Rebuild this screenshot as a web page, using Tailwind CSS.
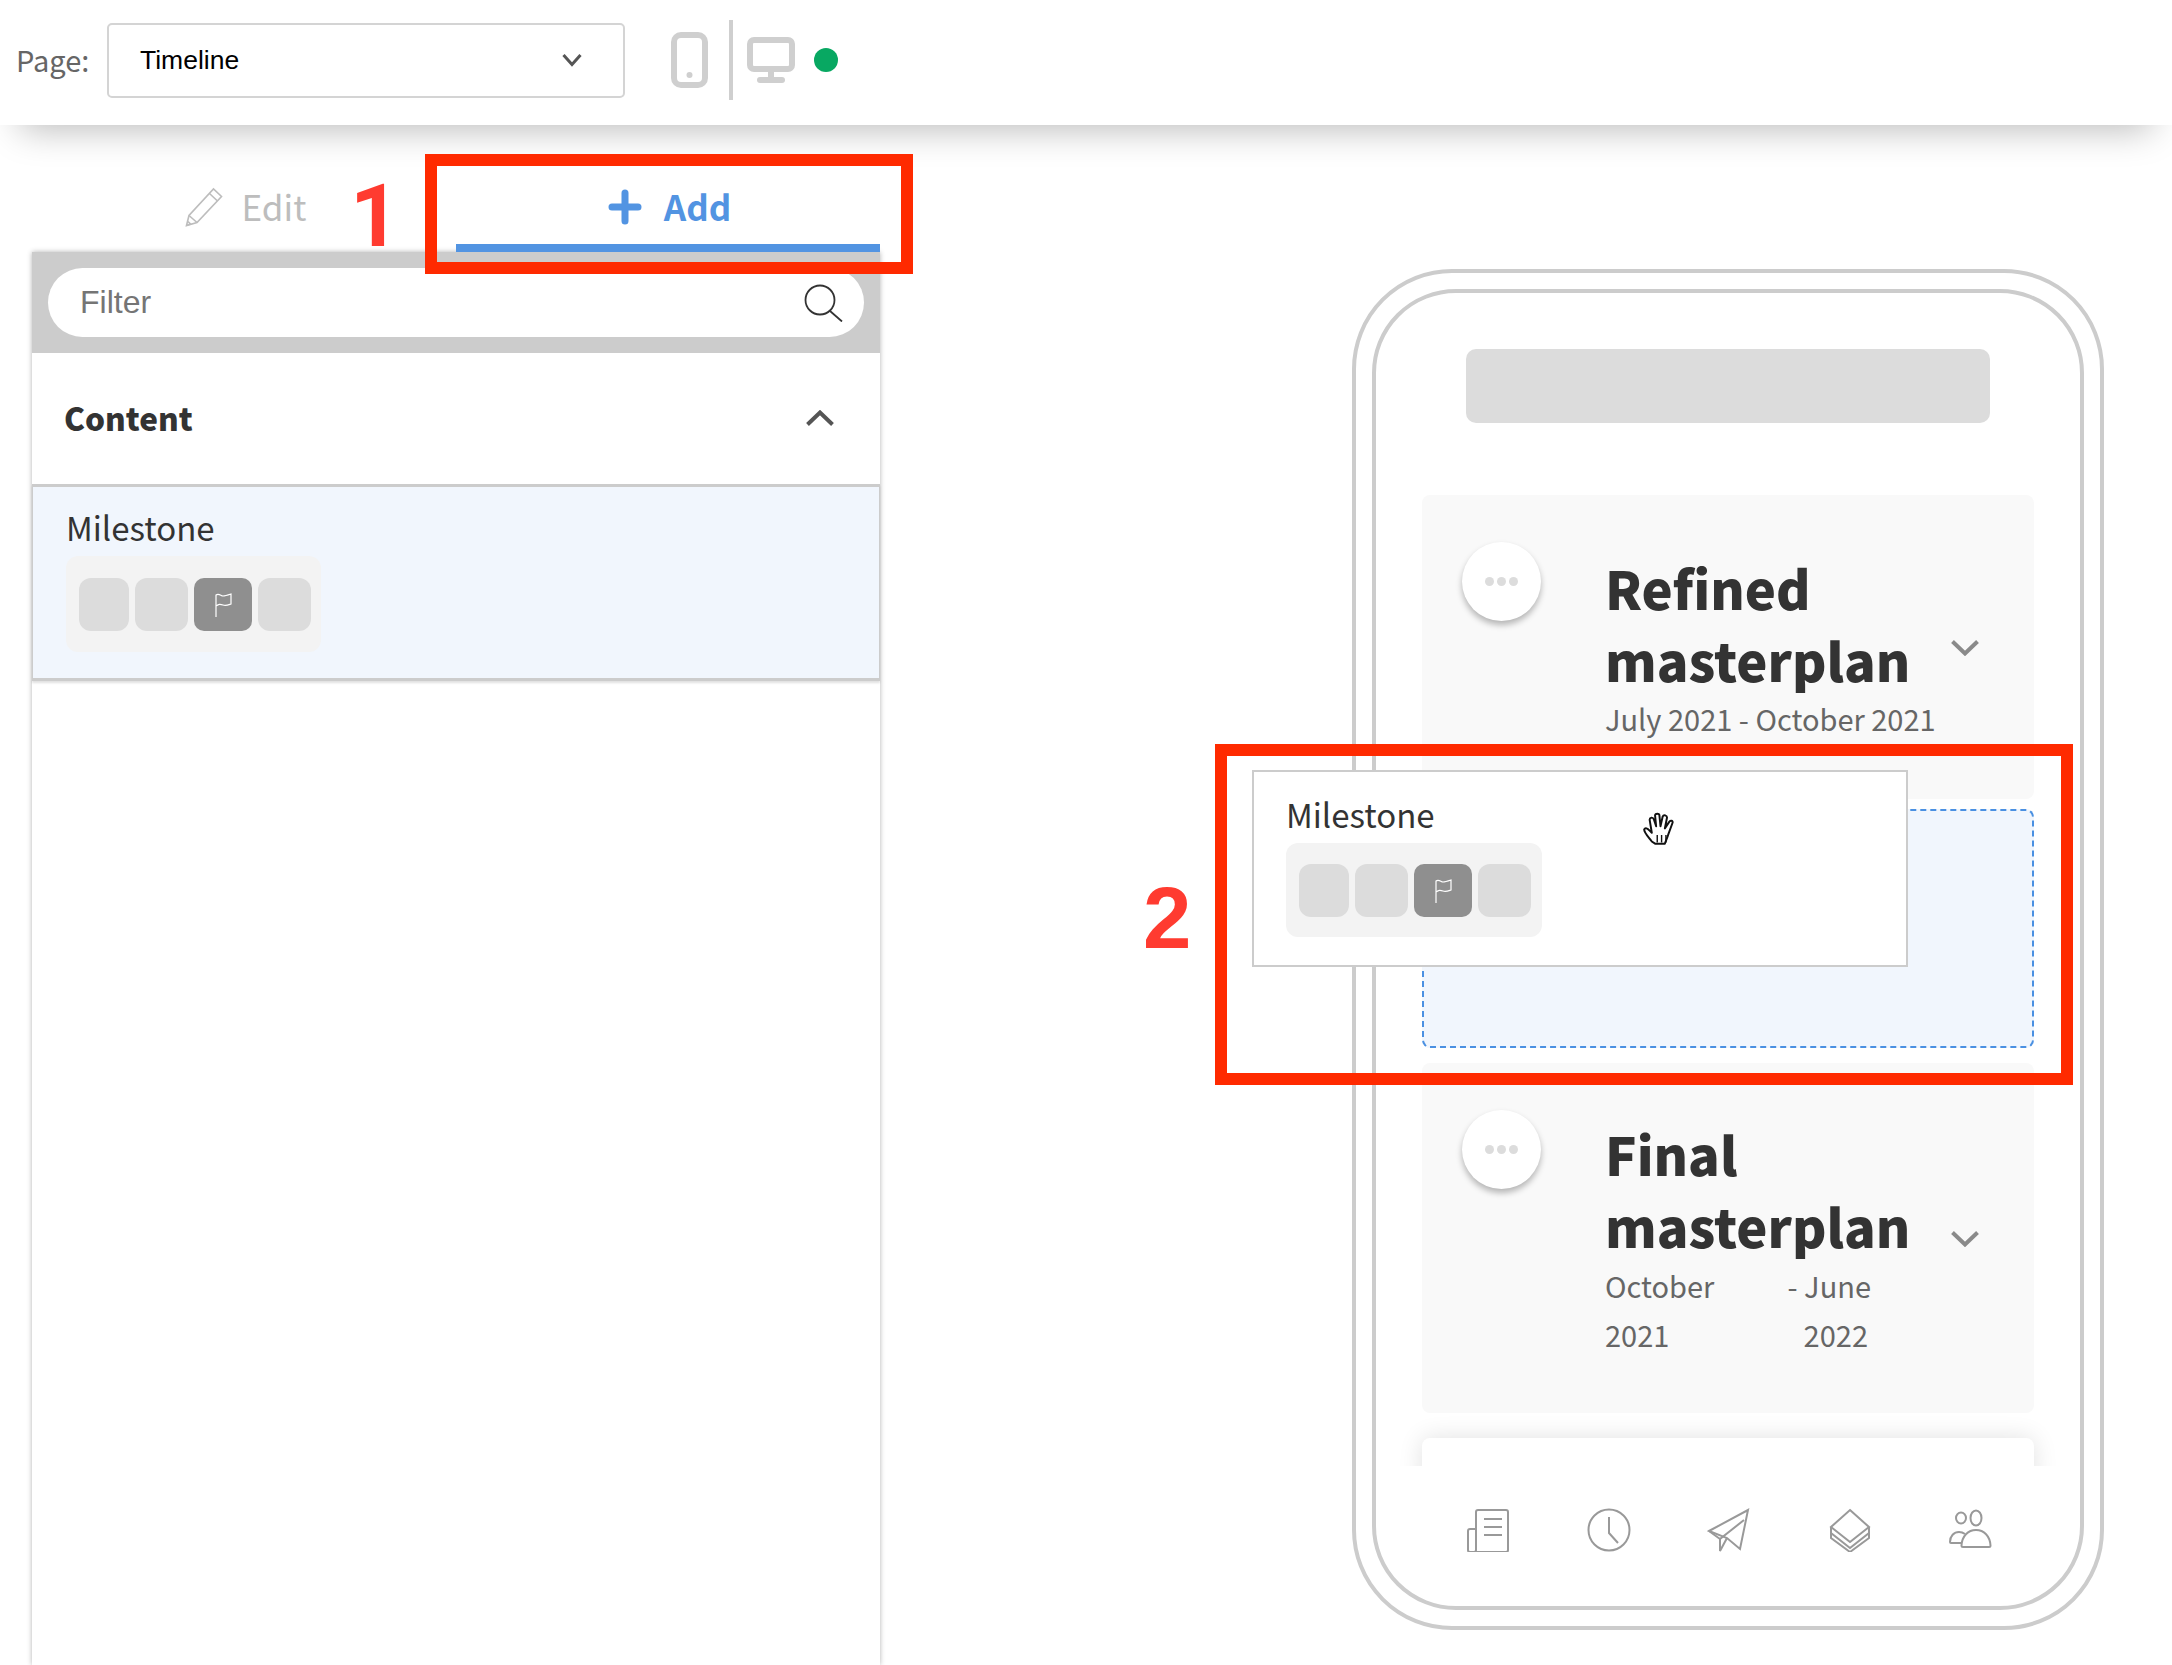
<!DOCTYPE html>
<html lang="en">
<head>
  <meta charset="UTF-8">
  <title>Timeline page builder</title>
  <script src="https://cdn.jsdelivr.net/npm/@tailwindcss/browser@4"></script>
</head>
<body class="relative h-[1665px] overflow-hidden bg-white font-['Noto_Sans_CJK_SC',sans-serif] text-[#333]">

  <!-- top bar -->
  <header class="relative z-10 flex h-[125px] items-center bg-white pb-[5px] pl-[16px] shadow-[0_24px_36px_-20px_rgba(0,0,0,0.28)]">
    <span class="w-[91px] text-[29px] text-[#666]">Page:</span>
    <div class="flex h-[75px] w-[518px] items-center justify-between rounded-[5px] border-2 border-[#d4d4d4] pl-[31px] pr-[41px] font-['Liberation_Sans',sans-serif] text-[26.5px] text-black">
      <span class="pt-[1px]">Timeline</span>
      <svg class="h-[14px] w-[20px]" viewBox="0 0 20 14" fill="none" stroke="#555" stroke-width="3"><path d="M1.5 2l8.5 9.5L18.500 2"/></svg>
    </div>
    <svg class="ml-[46px] h-[56px] w-[37px]" viewBox="0 0 37 56" fill="none"><rect x="3" y="3" width="31" height="50" rx="7" stroke="#cfcfcf" stroke-width="6"/><circle cx="18.500" cy="43" r="3" fill="#cfcfcf"/></svg>
    <div class="ml-[21px] h-[80px] w-[4px] bg-[#cfcfcf]"></div>
    <svg class="ml-[14px] h-[46px] w-[48px]" viewBox="0 0 48 46" fill="none"><rect x="3" y="3" width="42" height="29" rx="4" stroke="#cfcfcf" stroke-width="6"/><path d="M24 34v7" stroke="#cfcfcf" stroke-width="6"/><path d="M13 43h22" stroke="#cfcfcf" stroke-width="6" stroke-linecap="round"/></svg>
    <span class="ml-[19px] h-[24px] w-[24px] rounded-full bg-[#08a862]"></span>
  </header>

  <main class="flex items-start">
    <!-- left panel -->
    <section class="ml-[32px] w-[848px]">
      <div class="flex h-[127px] items-end">
        <div class="flex h-[82px] w-[424px] items-center justify-center gap-[19px] border-b-8 border-transparent pb-[1px] pl-[3px] text-[35px] text-[#bdbdbd]">
          <svg class="h-[40px] w-[38px]" viewBox="0 0 38 40" fill="none" stroke="#bdbdbd" stroke-width="1.600"><path d="M1.500 38.500l2.500-10L28.500 2l8 7.500L12 35.500z"/><path d="M4 28.500l8 7M24.500 6.500l8 7.500M1.500 38.500l4-1.500-2.500-2.500"/></svg>
          <span>Edit</span>
        </div>
        <div class="flex h-[82px] w-[424px] items-center justify-center gap-[22px] border-b-8 border-[#5294e2] pb-[1px] pl-[3px] text-[35px] font-bold text-[#5294e2]">
          <svg class="h-[36px] w-[34px]" viewBox="0 0 34 36" fill="none" stroke="#5294e2" stroke-width="7" stroke-linecap="round"><path d="M17 4v28M4 18h26"/></svg>
          <span>Add</span>
        </div>
      </div>

      <div class="h-[1413px] bg-white shadow-[0_0_5px_rgba(0,0,0,0.3)]">
        <div class="h-[101px] bg-[#cccccc] px-[16px] pt-[16px]">
          <div class="flex h-[69px] items-center justify-between rounded-full bg-white pl-[32px] pr-[21px] font-['Liberation_Sans',sans-serif] text-[32px] text-[#757575]">
            <span class="pb-[2px]">Filter</span>
            <svg class="h-[38px] w-[39px]" viewBox="0 0 39 38" fill="none" stroke="#333" stroke-width="1.800"><circle cx="16" cy="16" r="14.500"/><path d="M26 27l12 10.500"/></svg>
          </div>
        </div>
        <div class="flex h-[131px] items-center justify-between pb-[2px] pl-[32px] pr-[46px]">
          <span class="text-[31.500px] font-black">Content</span>
          <svg class="h-[16px] w-[28px]" viewBox="0 0 28 16" fill="none" stroke="#555" stroke-width="4"><path d="M1.500 14.500L14 2.500l12.500 12"/></svg>
        </div>
        <div class="h-[197px] border-x border-b-[3px] border-t-[3px] border-[#cccccc] bg-[#f1f6fd] pl-[33px] pt-[17px] shadow-[0_2px_2px_rgba(0,0,0,0.12)]">
          <div class="h-[46px] text-[33px] leading-[46px]">Milestone</div>
          <div class="mt-[6px] flex h-[96px] w-[255px] gap-[6px] rounded-[12px] bg-[#f3f3f3] pl-[13px] pt-[22px]">
            <div class="h-[53px] w-[50px] rounded-[12px] bg-[#dcdcdc]"></div>
            <div class="h-[53px] w-[53px] rounded-[12px] bg-[#dcdcdc]"></div>
            <div class="flex h-[53px] w-[58px] items-center justify-center rounded-[10px] bg-[#8f8f8f]">
              <svg class="h-[26px] w-[18px]" viewBox="0 0 18 26" fill="none" stroke="#fff" stroke-width="1.200"><path d="M2 25V3c3-2 5 1 7 1s5-1 8-2v10c-3 1-5 2-8 1s-4-1-7 1"/></svg>
            </div>
            <div class="h-[53px] w-[53px] rounded-[12px] bg-[#dcdcdc]"></div>
          </div>
        </div>
      </div>
    </section>

    <!-- phone preview -->
    <section class="ml-[472px] mt-[144px] h-[1361px] w-[752px] rounded-[100px] border-4 border-[#cccccc] p-[16px]">
      <div class="h-[1321px] rounded-[84px] border-4 border-[#cccccc]">
        <div class="mx-auto mt-[56px] h-[74px] w-[524px] rounded-[10px] bg-[#dcdcdc]"></div>

        <div class="mx-auto mt-[72px] h-[971px] w-[656px] overflow-hidden px-[22px]">
          <article class="flex h-[304px] items-center rounded-[8px] bg-[#f9f9f9] pl-[40px]">
            <div class="mb-[132px] flex h-[79px] w-[79px] items-center justify-center gap-[3px] rounded-full bg-white shadow-[0_4px_6px_rgba(0,0,0,0.28)]">
              <span class="h-[9px] w-[9px] rounded-full bg-[#dcdcdc]"></span>
              <span class="h-[9px] w-[9px] rounded-full bg-[#dcdcdc]"></span>
              <span class="h-[9px] w-[9px] rounded-full bg-[#dcdcdc]"></span>
            </div>
            <div class="mb-[2px] ml-[64px] w-[346px]">
              <h2 class="text-[52.500px] font-black leading-[72px]">Refined masterplan</h2>
              <p class="whitespace-nowrap text-[29px] leading-[47px] text-[#666]">July 2021 - October 2021</p>
            </div>
            <svg class="mt-[2px] h-[16px] w-[28px]" viewBox="0 0 28 16" fill="none" stroke="#8a8a8a" stroke-width="4"><path d="M1.500 1.500L14 13.500l12.500-12"/></svg>
          </article>

          <div class="mt-[10px] h-[239px] rounded-[8px] border-2 border-dashed border-[#4a90e2] bg-[#f1f6fd]"></div>

          <article class="mt-[15px] flex h-[350px] items-center rounded-[8px] bg-[#f9f9f9] pl-[40px]">
            <div class="mb-[178px] flex h-[79px] w-[79px] items-center justify-center gap-[3px] rounded-full bg-white shadow-[0_4px_6px_rgba(0,0,0,0.28)]">
              <span class="h-[9px] w-[9px] rounded-full bg-[#dcdcdc]"></span>
              <span class="h-[9px] w-[9px] rounded-full bg-[#dcdcdc]"></span>
              <span class="h-[9px] w-[9px] rounded-full bg-[#dcdcdc]"></span>
            </div>
            <div class="ml-[64px] w-[346px]">
              <h2 class="text-[52.500px] font-black leading-[72px]">Final masterplan</h2>
              <div class="flex text-[29px] leading-[49px] text-[#666]">
                <p class="w-[176px]">October 2021</p>
                <p class="w-[90px] text-right">- June <span class="mr-[3px]">2022</span></p>
              </div>
            </div>
            <svg class="mt-[2px] h-[16px] w-[28px]" viewBox="0 0 28 16" fill="none" stroke="#8a8a8a" stroke-width="4"><path d="M1.500 1.500L14 13.500l12.500-12"/></svg>
          </article>

          <div class="mt-[25px] h-[80px] rounded-[8px] bg-white shadow-[0_0_24px_rgba(0,0,0,0.12)]"></div>
        </div>

        <!-- bottom nav -->
        <nav class="mt-[42px] flex justify-center gap-[76.500px] pl-[2px]">
          <svg class="h-[44px] w-[44px]" viewBox="0 0 44 44" fill="none" stroke="#999" stroke-width="2"><path d="M10 36V4a2 2 0 0 1 2-2h28a2 2 0 0 1 2 2v38a2 2 0 0 1-2 2H4"/><path d="M10 21H4a2 2 0 0 0-2 2v19a2 2 0 0 0 2 2h4a2 2 0 0 0 2-2V36"/><path d="M18 11h18M18 19h18M18 27h18"/></svg>
          <svg class="h-[44px] w-[44px]" viewBox="0 0 44 44" fill="none" stroke="#999" stroke-width="2"><circle cx="22" cy="22" r="20.500"/><path d="M22 9v16l9 10"/></svg>
          <svg class="h-[44px] w-[44px]" viewBox="0 0 44 44" fill="none" stroke="#999" stroke-width="2"><path d="M2 23L41 2 33 41l-13-11z"/><path d="M37 12L13 31v12l7-13M13 31l-11-8"/></svg>
          <svg class="h-[44px] w-[44px]" viewBox="0 0 44 44" fill="none" stroke="#999" stroke-width="2"><path d="M22 2l19 17-19 15L3 19z"/><path d="M3 19v6l19 15 19-15v-6"/><path d="M3 25v5l19 14 19-14v-5"/></svg>
          <svg class="h-[44px] w-[44px]" viewBox="0 0 44 44" fill="none" stroke="#999" stroke-width="2"><ellipse cx="13" cy="10" rx="5" ry="5.500"/><ellipse cx="28" cy="10" rx="5.500" ry="7.500"/><path d="M13 35H3a1 1 0 0 1-1-1c0-6 4-10 9-10 2 0 4 .5 6 2"/><path d="M15 39c-1 0-1.500-.5-1.500-1.500C14 28 20 22 28 22s14 6 14.500 15.500c0 1-.5 1.500-1.500 1.500z"/></svg>
        </nav>
      </div>
    </section>
  </main>

  <!-- dragged item -->
  <div class="absolute left-[1252px] top-[770px] z-20 h-[197px] w-[656px] border-2 border-[#cccccc] bg-white pl-[32px] pt-[19px]">
    <div class="h-[46px] text-[33px] leading-[46px]">Milestone</div>
    <div class="mt-[6px] flex h-[94px] w-[256px] gap-[6px] rounded-[12px] bg-[#f3f3f3] pl-[13px] pt-[21px]">
      <div class="h-[53px] w-[50px] rounded-[12px] bg-[#dcdcdc]"></div>
      <div class="h-[53px] w-[53px] rounded-[12px] bg-[#dcdcdc]"></div>
      <div class="flex h-[53px] w-[58px] items-center justify-center rounded-[10px] bg-[#8f8f8f]">
        <svg class="h-[26px] w-[18px]" viewBox="0 0 18 26" fill="none" stroke="#fff" stroke-width="1.200"><path d="M2 25V3c3-2 5 1 7 1s5-1 8-2v10c-3 1-5 2-8 1s-4-1-7 1"/></svg>
      </div>
      <div class="h-[53px] w-[53px] rounded-[12px] bg-[#dcdcdc]"></div>
    </div>
    <!-- hand cursor -->
    <svg class="absolute left-[388px] top-[39px] h-[37px] w-[37px]" viewBox="0 0 34 34" fill="#fff" stroke="#111" stroke-width="1.800" stroke-linejoin="round"><path d="M9 28c-3-4-7-8-7-11 1-2 3-1 5 1l2 2-2-12c0-2 3-3 4 0l2 6-1-10c0-2 4-2 4 0l1 10 2-9c1-2 4-1 4 1l-2 10 4-6c1-2 4-1 3 1l-4 11c-1 3-2 5-3 8H12z"/><path d="M14 22v7M18 22v7M22 22v7" stroke-width="1.300"/></svg>
  </div>

  <!-- annotations -->
  <div class="absolute left-[425px] top-[154px] z-30 h-[120px] w-[488px] border-[12px] border-[#ff2a00]"></div>
  <div class="absolute left-[1215px] top-[744px] z-30 h-[341px] w-[858px] border-[12px] border-[#ff2a00]"></div>
  <span class="absolute left-[350px] top-[166px] z-30 font-['Roboto',sans-serif] text-[87px] font-bold leading-[100px] text-[#ff3b30]">1</span>
  <span class="absolute left-[1143px] top-[868px] z-30 font-['Liberation_Sans',sans-serif] text-[87px] font-bold leading-[100px] text-[#ff3b30]">2</span>
</body>
</html>
